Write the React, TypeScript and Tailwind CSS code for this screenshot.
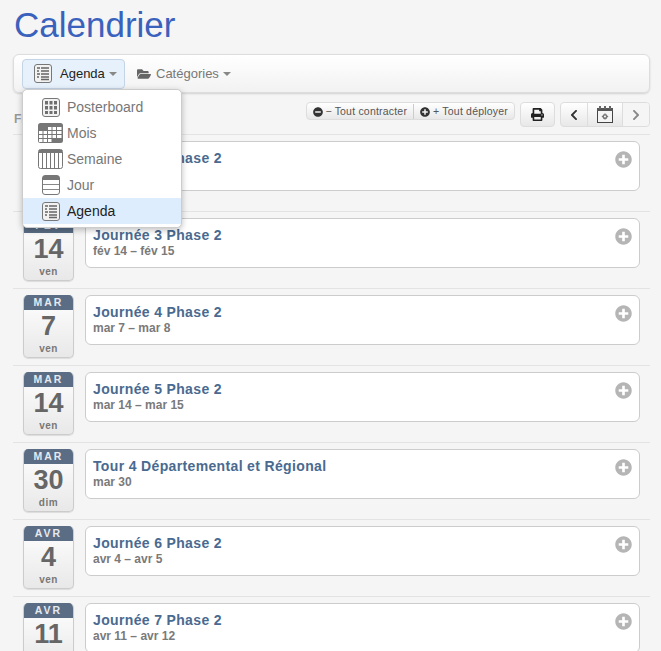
import { FaChevronLeft, FaChevronRight, FaFolderOpen, FaMinusCircle, FaPlusCircle, FaPrint } from "react-icons/fa";

const EVENTS = [
  { month: "FÉV", day: "7", dow: "ven", title: "Journée 2 Phase 2", range: "fév 7 – fév 8" },
  { month: "FÉV", day: "14", dow: "ven", title: "Journée 3 Phase 2", range: "fév 14 – fév 15" },
  { month: "MAR", day: "7", dow: "ven", title: "Journée 4 Phase 2", range: "mar 7 – mar 8" },
  { month: "MAR", day: "14", dow: "ven", title: "Journée 5 Phase 2", range: "mar 14 – mar 15" },
  { month: "MAR", day: "30", dow: "dim", title: "Tour 4 Départemental et Régional", range: "mar 30" },
  { month: "AVR", day: "4", dow: "ven", title: "Journée 6 Phase 2", range: "avr 4 – avr 5" },
  { month: "AVR", day: "11", dow: "ven", title: "Journée 7 Phase 2", range: "avr 11 – avr 12" },
];

function AgendaIcon() {
  return (
    <svg width="18" height="19" viewBox="0 0 18 19" fill="none">
      <rect x="0.5" y="0.5" width="17" height="18" rx="2.5" fill="#f2f2f2" stroke="#777" />
      <path d="M3 4h3M7 4h8M3 7h2M7 7h8M3 10h3M7 10h8M3 13h2M7 13h8M7 15.5h8" stroke="#666" strokeWidth="1.5" />
    </svg>
  );
}

function PosterIcon() {
  return (
    <svg width="18" height="19" viewBox="0 0 18 19" fill="none">
      <rect x="0.5" y="0.5" width="17" height="18" rx="2.5" fill="#f2f2f2" stroke="#777" />
      <path d="M3 3h3v3.500H3zM7.500 3h3v3.500h-3zM12 3h3v3.500h-3zM3 8h3v3.500H3zM7.500 8h3v3.500h-3zM12 8h3v3.500h-3zM3 13h3v3H3zM7.500 13h3v3h-3zM12 13h3v3h-3z" fill="#6f6f6f" />
    </svg>
  );
}

function MonthIcon() {
  return (
    <svg width="25" height="20" viewBox="0 0 25 20">
      <rect width="25" height="20" rx="2.500" fill="#777" />
      <path
        d="M10 4h3.500v3H10zM14.500 4H18v3h-3.500zM19 4h4.500v3H19zM1 8h3.500v3H1zM5.500 8H9v3H5.500zM10 8h3.500v3H10zM14.500 8H18v3h-3.500zM19 8h4.500v3H19zM1 12h3.500v3H1zM5.500 12H9v3H5.500zM10 12h3.500v3H10zM14.500 12H18v3h-3.500zM19 12h4.500v3H19zM1 16h3.500v3H1zM5.500 16H9v3H5.500zM10 16h3.500v3H10z"
        fill="#fff"
      />
    </svg>
  );
}

function WeekIcon() {
  return (
    <svg width="25" height="20" viewBox="0 0 25 20" fill="none">
      <rect x="0.5" y="0.5" width="24" height="19" rx="2" fill="#fff" stroke="#777" />
      <path d="M1 1h23v3H1z" fill="#777" />
      <path d="M4.500 4v15M8.500 4v15M12.500 4v15M16.500 4v15M20.500 4v15" stroke="#777" />
    </svg>
  );
}

function DayIcon() {
  return (
    <svg width="18" height="20" viewBox="0 0 18 20" fill="none">
      <rect x="0.5" y="0.5" width="17" height="19" rx="2.5" fill="#fff" stroke="#777" />
      <path d="M1 1h16v4H1z" fill="#777" />
      <path d="M1 9.500h16M1 14.500h16" stroke="#888" />
    </svg>
  );
}

function CalendarCogIcon() {
  return (
    <svg width="16" height="17" viewBox="0 0 16 17" fill="none">
      <rect x="0.500" y="2.500" width="15" height="14" fill="#f4f4f4" stroke="#444" />
      <path d="M0 2h16v3H0z" fill="#555" />
      <path d="M3 0v3M8 0v3M13 0v3" stroke="#666" strokeWidth="2" />
      <circle cx="8" cy="10.500" r="1.800" stroke="#777" strokeWidth="1.500" />
      <path d="M8 7.300v1.200M8 12.500v1.200M4.800 10.500H6M10 10.500h1.200" stroke="#777" />
    </svg>
  );
}

function Caret() {
  return <span className="ml-1 inline-block h-0 w-0 border-x-4 border-t-4 border-x-transparent border-t-[#888]" />;
}

function EventRow({ month, day, dow, title, range }: (typeof EVENTS)[number]) {
  return (
    <div className="flex h-[77px] gap-[11px] border-t border-[#e3e3e3] pt-[6px] pl-[10px]">
      <div className="h-[63px] w-[51px] shrink-0 overflow-hidden rounded-[5px] border border-t-0 border-[#ccc] bg-gradient-to-b from-white to-[#e8e8e8] text-center shadow-[0_1px_1px_rgba(0,0,0,0.1)]">
        <div className="h-[15px] bg-[#5a6d85] text-[10.5px] leading-[15px] font-bold tracking-[2px] text-[#e6e9ee]">{month}</div>
        <div className="mt-[1px] h-[31px] text-[27px] leading-[31px] font-bold text-[#666]">{day}</div>
        <div className="text-[10px] leading-[14px] font-bold tracking-[0.5px] text-[#777]">{dow}</div>
      </div>
      <div className="relative h-[50px] w-[555px] rounded-[6px] border border-[#ccc] bg-white pt-[8px] pl-[7px]">
        <div className="text-[14px] leading-[17px] font-bold tracking-[0.35px] text-[#4a6a90]">{title}</div>
        <div className="text-[12px] leading-[15px] font-bold text-[#7a7a7a]">{range}</div>
        <FaPlusCircle className="absolute top-[9px] right-[7px] text-[17px] text-[#b5b5b5]" />
      </div>
    </div>
  );
}

function DropdownItem({ icon, label, active }: { icon: React.ReactNode; label: string; active?: boolean }) {
  return (
    <div className={`flex h-[26px] items-center text-[14px] ${active ? "bg-[#deedfd] text-[#222]" : "text-[#777]"}`}>
      <span className="flex w-[44px] shrink-0 justify-end pr-[4px]">
        <span className="flex w-[25px] justify-center">{icon}</span>
      </span>
      <span>{label}</span>
    </div>
  );
}

export default function App() {
  return (
    <div className="relative h-[651px] overflow-hidden bg-[#f5f5f5] font-['Liberation_Sans',Arial,sans-serif]">
      <div className="w-[650px] pt-[3px] pl-[13px]">
        <h1 className="h-[51px] pl-[1px] text-[35px] leading-[44px] font-normal text-[#3a62bd]">Calendrier</h1>

        {/* Toolbar */}
        <div className="flex h-[39px] w-[637px] items-center gap-[6px] rounded-[6px] border border-[#ddd] bg-gradient-to-b from-white to-[#f2f2f2] pl-[8px] shadow-[0_1px_2px_rgba(0,0,0,0.15)]">
          <div className="flex h-[30px] w-[103px] items-center rounded-[4px] border border-[#c3d4e6] bg-[#e6f1fc] pl-[11px] text-[13px] text-[#222]">
            <AgendaIcon />
            <span className="ml-[8px] pt-[1px]">Agenda</span>
            <Caret />
          </div>
          <div className="flex h-[30px] items-center pl-[6px] text-[13px] text-[#777]">
            <FaFolderOpen className="text-[14px] text-[#666]" />
            <span className="ml-[5px] pt-[1px]">Catégories</span>
            <Caret />
          </div>
        </div>

        {/* Sub toolbar */}
        <div className="flex h-[41px] items-start justify-between pt-[9px]">
          <div className="pt-[8px] pl-[1px] text-[12px] font-bold text-[#999]">FÉVRIER</div>
          <div className="flex items-start">
            <div className="flex h-[18px] items-center rounded-[4px] border border-[#ddd] bg-gradient-to-b from-white to-[#e8e8e8] pt-[1px] text-[10.500px] tracking-[0.2px] text-[#555]">
              <span className="flex items-center gap-[2px] border-r border-[#ccc] pr-[6px] pl-[6px]">
                <FaMinusCircle className="text-[10px] text-[#333]" /> − Tout contracter
              </span>
              <span className="flex items-center gap-[3px] pr-[6px] pl-[6px]">
                <FaPlusCircle className="text-[10px] text-[#333]" /> + Tout déployer
              </span>
            </div>
            <div className="ml-[5px] flex h-[25px] w-[35px] items-center justify-center rounded-[4px] border border-[#ddd] bg-gradient-to-b from-white to-[#e8e8e8]">
              <FaPrint className="text-[13px] text-[#222]" />
            </div>
            <div className="ml-[5px] flex h-[25px] w-[90px] items-center overflow-hidden rounded-[4px] border border-[#ddd] bg-gradient-to-b from-white to-[#e8e8e8]">
              <span className="flex h-full w-[27px] items-center justify-center border-r border-[#ddd]">
                <FaChevronLeft className="text-[12px] text-[#333]" />
              </span>
              <span className="flex h-full w-[35px] items-center justify-center border-r border-[#ddd]">
                <CalendarCogIcon />
              </span>
              <span className="flex h-full flex-1 items-center justify-center bg-[#f5f5f5]">
                <FaChevronRight className="text-[12px] text-[#888]" />
              </span>
            </div>
          </div>
        </div>
      </div>

      {/* Agenda list */}
      <div className="mx-[13px] w-[637px]">
        {EVENTS.map((event) => (
          <EventRow key={event.title} {...event} />
        ))}
      </div>

      {/* Open view menu */}
      <div className="absolute top-[89px] left-[22px] w-[160px] rounded-[5px] border border-[#ccc] bg-white pt-[4px] pb-[3px] shadow-[0_2px_6px_rgba(0,0,0,0.25)]">
        <DropdownItem icon={<PosterIcon />} label="Posterboard" />
        <DropdownItem icon={<MonthIcon />} label="Mois" />
        <DropdownItem icon={<WeekIcon />} label="Semaine" />
        <DropdownItem icon={<DayIcon />} label="Jour" />
        <DropdownItem icon={<AgendaIcon />} label="Agenda" active />
      </div>
    </div>
  );
}
